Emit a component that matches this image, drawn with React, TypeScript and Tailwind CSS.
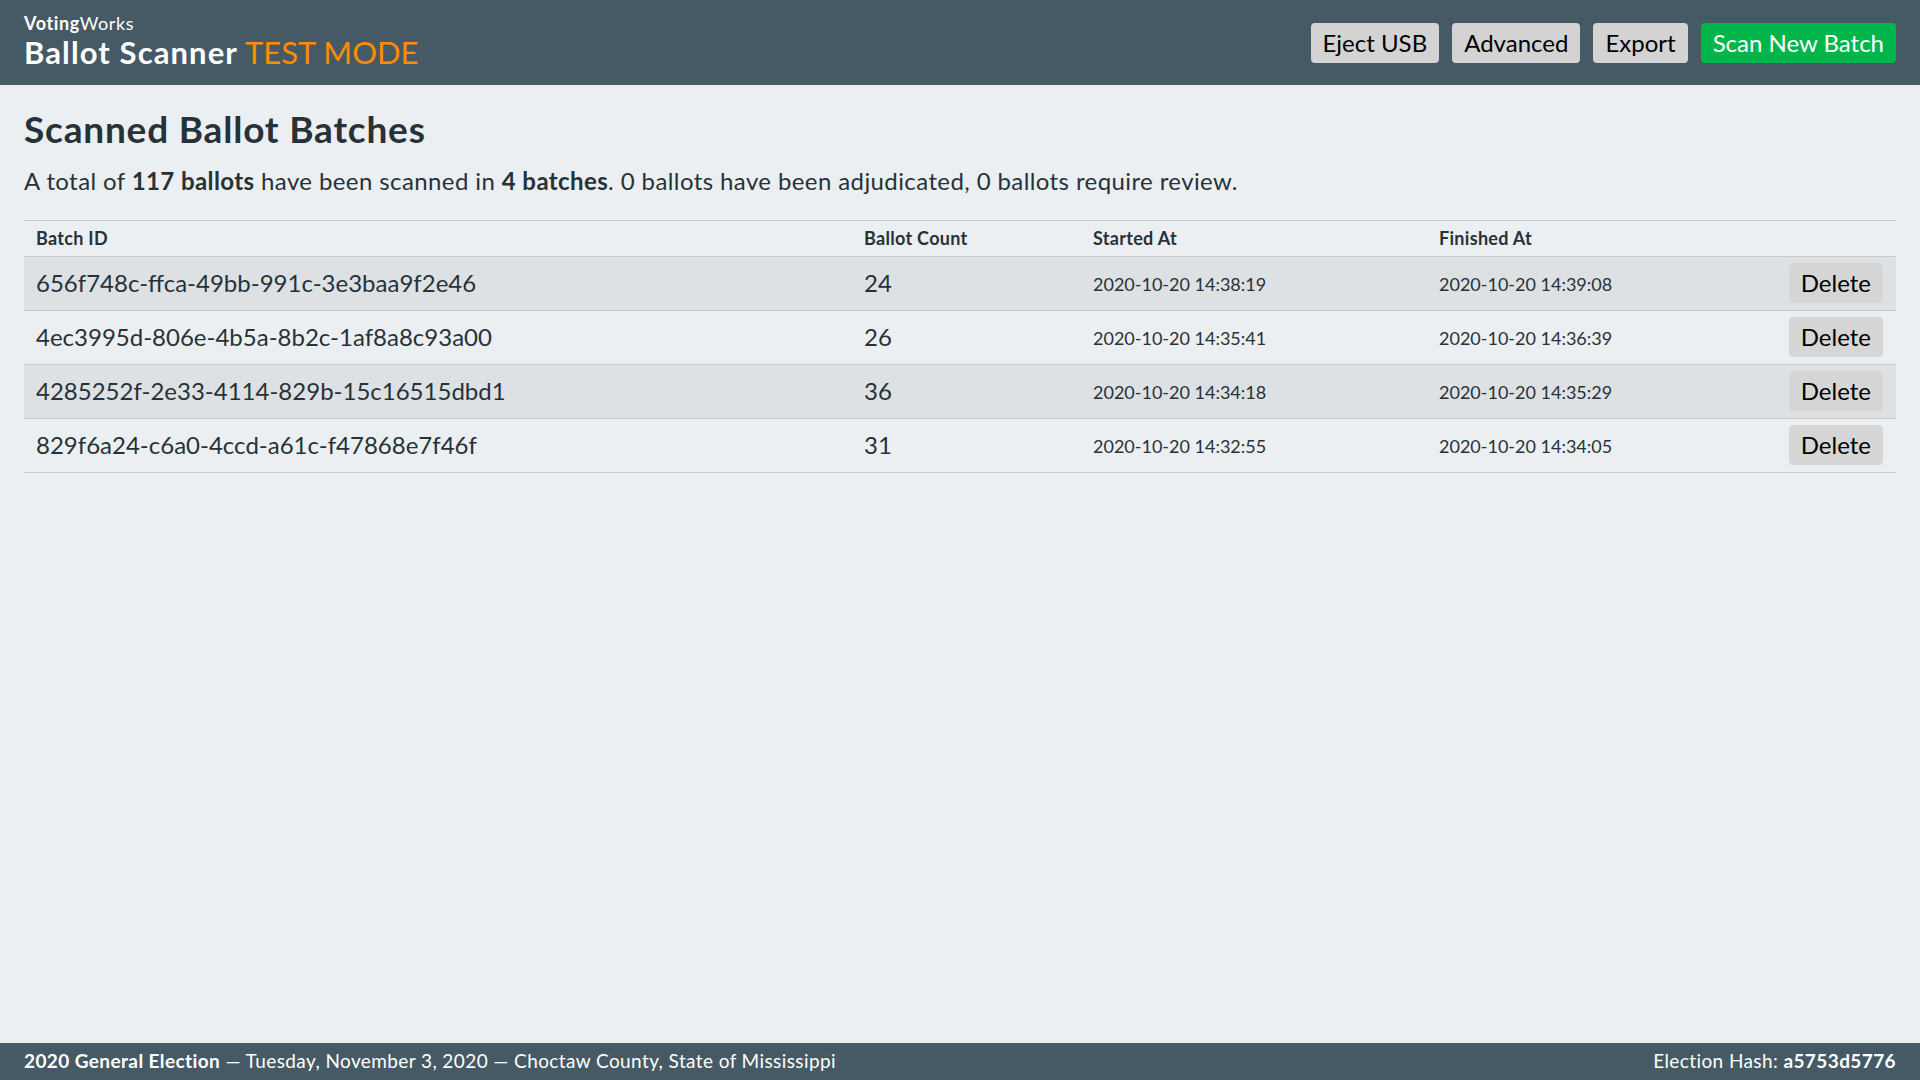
import React from "react";

const batches = [
  ["656f748c-ffca-49bb-991c-3e3baa9f2e46", "24", "2020-10-20 14:38:19", "2020-10-20 14:39:08"],
  ["4ec3995d-806e-4b5a-8b2c-1af8a8c93a00", "26", "2020-10-20 14:35:41", "2020-10-20 14:36:39"],
  ["4285252f-2e33-4114-829b-15c16515dbd1", "36", "2020-10-20 14:34:18", "2020-10-20 14:35:29"],
  ["829f6a24-c6a0-4ccd-a61c-f47868e7f46f", "31", "2020-10-20 14:32:55", "2020-10-20 14:34:05"],
];

export default function App() {
  return (
    <div
      className="flex h-screen flex-col bg-[#eceff1] text-[#263238]"
      style={{ fontFamily: "Lato, 'Noto Sans', sans-serif" }}
    >
      <header className="flex h-[85px] shrink-0 items-center justify-between bg-[#455a64] px-6 text-white">
        <div className="pb-[2px]">
          <div className="text-[18px] leading-[22px] tracking-[0.6px]">
            <span className="font-bold">Voting</span>Works
          </div>
          <div className="text-[31px] leading-[37px]">
            <span className="font-bold tracking-[1.1px]">Ballot Scanner</span>{" "}
            <span className="text-[#ff8c00]">TEST MODE</span>
          </div>
        </div>
        <div className="flex gap-[13px] text-[24px]">
          {["Eject USB", "Advanced", "Export"].map((b) => (
            <button key={b} className="h-10 rounded-[4px] bg-[#d3d3d3] px-3 text-black">
              {b}
            </button>
          ))}
          <button className="h-10 rounded-[4px] bg-[#00b64a] px-3 text-white">Scan New Batch</button>
        </div>
      </header>

      <main className="flex-1 px-6 pt-[22px]">
        <h1 className="text-[37px] font-bold leading-[1.2] tracking-[0.8px]">Scanned Ballot Batches</h1>
        <p className="mt-[14px] text-[24px] leading-[1.3] tracking-[0.4px]">
          A total of <strong>117 ballots</strong> have been scanned in <strong>4 batches</strong>. 0 ballots have
          been adjudicated, 0 ballots require review.
        </p>
        <table className="mt-[23px] w-full border-collapse text-left">
          <thead>
            <tr className="h-9 border-y border-[#c8cbcd] text-[18px] font-bold tracking-[0.3px]">
              <th className="w-[840px] pl-3">Batch ID</th>
              <th className="w-[229px]">Ballot Count</th>
              <th className="w-[346px]">Started At</th>
              <th>Finished At</th>
              <th></th>
            </tr>
          </thead>
          <tbody>
            {batches.map(([id, count, start, end], i) => (
              <tr
                key={id}
                className={`h-[54px] border-b border-[#c8cbcd] ${i % 2 === 0 ? "bg-[#dee1e4]" : ""}`}
              >
                <td className="pl-3 text-[24px]">{id}</td>
                <td className="text-[24px]">{count}</td>
                <td className="pt-[3px] text-[18px]">{start}</td>
                <td className="pt-[3px] text-[18px]">{end}</td>
                <td className="pr-[13px] text-right">
                  <button className="h-10 rounded-[4px] bg-[#d6d6d6] px-3 text-[24px] text-black">
                    Delete
                  </button>
                </td>
              </tr>
            ))}
          </tbody>
        </table>
      </main>

      <footer className="flex h-[37px] shrink-0 items-center justify-between bg-[#455a64] px-6 text-[19px] tracking-[0.4px] text-white">
        <div>
          <strong>2020 General Election</strong> — Tuesday, November 3, 2020 — Choctaw County, State of Mississippi
        </div>
        <div>
          Election Hash: <strong>a5753d5776</strong>
        </div>
      </footer>
    </div>
  );
}
